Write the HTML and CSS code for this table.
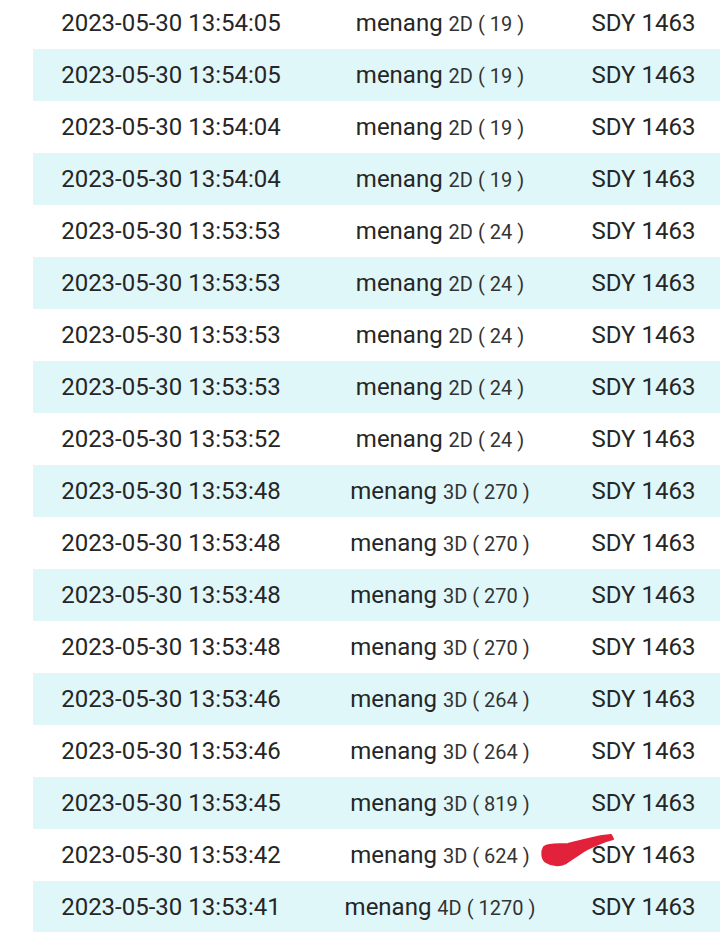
FILE: index.html
```html
<!doctype html>
<html lang="en">
	<head>
		<meta charset="UTF-8" />
		<meta name="viewport" content="width=device-width, initial-scale=1.0" />
		<title>Riwayat Menang</title>
		<link rel="stylesheet" href="styles.css">
	</head>
	<body>
		<div class="history">
			<table class="wins">
				<tbody>
					<tr><td class="time">2023-05-30 13:54:05</td><td class="result">menang <span class="bet">2D ( 19 )</span></td><td class="market">SDY 1463</td></tr>
					<tr><td class="time">2023-05-30 13:54:05</td><td class="result">menang <span class="bet">2D ( 19 )</span></td><td class="market">SDY 1463</td></tr>
					<tr><td class="time">2023-05-30 13:54:04</td><td class="result">menang <span class="bet">2D ( 19 )</span></td><td class="market">SDY 1463</td></tr>
					<tr><td class="time">2023-05-30 13:54:04</td><td class="result">menang <span class="bet">2D ( 19 )</span></td><td class="market">SDY 1463</td></tr>
					<tr><td class="time">2023-05-30 13:53:53</td><td class="result">menang <span class="bet">2D ( 24 )</span></td><td class="market">SDY 1463</td></tr>
					<tr><td class="time">2023-05-30 13:53:53</td><td class="result">menang <span class="bet">2D ( 24 )</span></td><td class="market">SDY 1463</td></tr>
					<tr><td class="time">2023-05-30 13:53:53</td><td class="result">menang <span class="bet">2D ( 24 )</span></td><td class="market">SDY 1463</td></tr>
					<tr><td class="time">2023-05-30 13:53:53</td><td class="result">menang <span class="bet">2D ( 24 )</span></td><td class="market">SDY 1463</td></tr>
					<tr><td class="time">2023-05-30 13:53:52</td><td class="result">menang <span class="bet">2D ( 24 )</span></td><td class="market">SDY 1463</td></tr>
					<tr><td class="time">2023-05-30 13:53:48</td><td class="result">menang <span class="bet">3D ( 270 )</span></td><td class="market">SDY 1463</td></tr>
					<tr><td class="time">2023-05-30 13:53:48</td><td class="result">menang <span class="bet">3D ( 270 )</span></td><td class="market">SDY 1463</td></tr>
					<tr><td class="time">2023-05-30 13:53:48</td><td class="result">menang <span class="bet">3D ( 270 )</span></td><td class="market">SDY 1463</td></tr>
					<tr><td class="time">2023-05-30 13:53:48</td><td class="result">menang <span class="bet">3D ( 270 )</span></td><td class="market">SDY 1463</td></tr>
					<tr><td class="time">2023-05-30 13:53:46</td><td class="result">menang <span class="bet">3D ( 264 )</span></td><td class="market">SDY 1463</td></tr>
					<tr><td class="time">2023-05-30 13:53:46</td><td class="result">menang <span class="bet">3D ( 264 )</span></td><td class="market">SDY 1463</td></tr>
					<tr><td class="time">2023-05-30 13:53:45</td><td class="result">menang <span class="bet">3D ( 819 )</span></td><td class="market">SDY 1463</td></tr>
					<tr><td class="time">2023-05-30 13:53:42</td><td class="result">menang <span class="bet">3D ( 624 )</span></td><td class="market">SDY 1463
						<svg class="scribble" width="76" height="36" viewBox="0 0 76 36"><path d="M4 14 C10 10 20 12 28 11 C40 8 52 5 62 3 L71 2 L73 6 L66 8 C58 11 50 14 44 18 C38 22 32 26 26 30 C20 33 12 33 6 29 C2 26 1 19 4 14 Z" fill="#e2213a" stroke="#e2213a" stroke-width="2" stroke-linejoin="round"/></svg>
					</td></tr>
					<tr><td class="time">2023-05-30 13:53:41</td><td class="result">menang <span class="bet">4D ( 1270 )</span></td><td class="market">SDY 1463</td></tr>
				</tbody>
			</table>
		</div>
	</body>
</html>
```

FILE: styles.css
```css
body {
	margin: 0;
	background: #fff;
	font-family: Roboto, 'Noto Sans', sans-serif;
	color: #262626;
	overflow: hidden;
}
.history {
	margin-top: -3px;
	padding-left: 33px;
}
.wins {
	border-collapse: collapse;
	width: 687px;
	table-layout: fixed;
}
.wins tr {
	height: 52px;
}
.wins tr:nth-child(even) {
	background: #e0f7fa;
}
.wins td {
	padding: 0;
	text-align: center;
	vertical-align: middle;
	font-size: 24px;
	white-space: nowrap;
}
.wins td.market {
	padding-right: 4px;
	position: relative;
}
.time {
	width: 276px;
}
.result {
	width: 262px;
}
.bet {
	font-size: 20px;
	color: #333;
}
.scribble {
	position: absolute;
	left: -31px;
	top: 4px;
}
```
